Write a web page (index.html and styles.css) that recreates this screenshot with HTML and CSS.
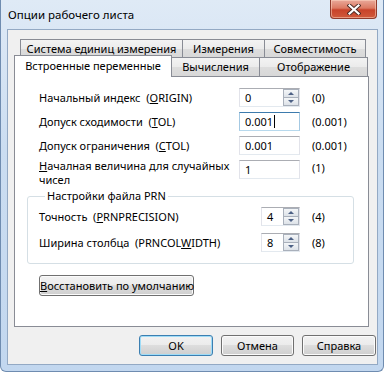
FILE: index.html
```html
<!DOCTYPE html>
<html lang="ru">
<head>
  <meta charset="UTF-8">
  <title>Опции рабочего листа</title>
  <link rel="stylesheet" href="styles.css">
</head>
<body>

  <div class="window">
    <div class="titlebar">
      <span class="title">Опции рабочего листа</span>
      <div class="close">
        <svg width="14" height="11" viewBox="0 0 14 11">
          <path d="M2.5 1.5 L11.5 9.5 M11.5 1.5 L2.5 9.5" stroke="#4a2a24" stroke-width="4" stroke-linecap="square"/>
          <path d="M2.5 1.5 L11.5 9.5 M11.5 1.5 L2.5 9.5" stroke="#ffffff" stroke-width="2.2" stroke-linecap="square"/>
        </svg>
      </div>
    </div>

    <div class="client">
      <div class="tabs">
        <div class="tab-row back">
          <div class="tab w1">Система единиц измерения</div>
          <div class="tab w2">Измерения</div>
          <div class="tab w3">Совместимость</div>
        </div>
        <div class="tab-row front">
          <div class="tab selected">Встроенные переменные</div>
          <div class="tab w4">Вычисления</div>
          <div class="tab w5">Отображение</div>
        </div>

        <div class="panel">
          <div class="row">
            <span class="label">Начальный индекс&nbsp; (<u>O</u>RIGIN)</span>
            <div class="field">
              <span class="value">0</span>
              <div class="spin"><span class="up"></span><span class="down"></span></div>
            </div>
            <span class="default">(0)</span>
          </div>
          <div class="row">
            <span class="label">Допуск сходимости&nbsp; (<u>T</u>OL)</span>
            <div class="field focused">
              <span class="value">0.001<span class="caret"></span></span>
            </div>
            <span class="default">(0.001)</span>
          </div>
          <div class="row">
            <span class="label">Допуск ограничения&nbsp; (<u>C</u>TOL)</span>
            <div class="field">
              <span class="value">0.001</span>
            </div>
            <span class="default">(0.001)</span>
          </div>
          <div class="row tall">
            <span class="label two-lines"><u>Н</u>ачалная величина для случайных<br>чисел</span>
            <div class="field">
              <span class="value">1</span>
            </div>
            <span class="default">(1)</span>
          </div>

          <fieldset class="group">
            <legend>Настройки файла PRN</legend>
            <div class="row">
              <span class="label wide">Точность&nbsp; (<u>P</u>RNPRECISION)</span>
              <div class="field small">
                <span class="value">4</span>
                <div class="spin"><span class="up"></span><span class="down"></span></div>
              </div>
              <span class="default">(4)</span>
            </div>
            <div class="row second">
              <span class="label wide">Ширина столбца&nbsp; (PRNCOL<u>W</u>IDTH)</span>
              <div class="field small">
                <span class="value">8</span>
                <div class="spin"><span class="up"></span><span class="down"></span></div>
              </div>
              <span class="default">(8)</span>
            </div>
          </fieldset>

          <button class="btn reset"><u>В</u>осстановить по умолчанию</button>
        </div>
      </div>

      <div class="buttons">
        <button class="btn ok">OK</button>
        <button class="btn cancel">Отмена</button>
        <button class="btn help">Справка</button>
      </div>
    </div>
  </div>

</body>
</html>
```

FILE: styles.css
```css
    body {
      margin: 0;
      padding: 0;
      font-family: "Noto Sans", Arial, sans-serif;
      font-size: 11px;
      color: #000;
      background: #fff;
    }

    .window {
      box-sizing: border-box;
      width: 384px;
      height: 372px;
      border: 1px solid #6f8cb0;
      border-top: none;
      border-radius: 0 0 6px 6px;
      background: linear-gradient(#dfeaf6, #cbddf1 40%, #c2d7ef);
    }

    .titlebar {
      display: flex;
      justify-content: space-between;
      height: 29px;
    }

    .title {
      padding: 6px 0 0 7px;
      font-size: 11.5px;
      line-height: 17px;
    }

    .close {
      box-sizing: border-box;
      width: 47px;
      height: 19px;
      margin-right: 6px;
      display: flex;
      align-items: center;
      justify-content: center;
      border: 1px solid #8f3b2d;
      border-top: none;
      border-radius: 0 0 4px 4px;
      background: linear-gradient(#e9a99a, #dc7a63 45%, #c8432a 55%, #d05a3c 100%);
      box-shadow: inset 0 0 0 1px rgba(255, 220, 200, 0.5);
    }

    .client {
      box-sizing: border-box;
      width: 371px;
      height: 336px;
      margin-left: 6px;
      border: 1px solid #93a9c4;
      background: #f0f0f0;
      padding: 9px 0 0 6px;
    }

    /* вкладки */
    .tab-row {
      display: flex;
    }

    .tab-row.back {
      padding-left: 6px;
    }

    .tab-row.front {
      margin-top: -1px;
      height: 19px;
      align-items: flex-end;
    }

    .tab {
      box-sizing: border-box;
      height: 19px;
      line-height: 18px;
      text-align: center;
      border: 1px solid #898c95;
      border-bottom: none;
      background: linear-gradient(#f3f3f3, #ebebeb 50%, #dddddd 50%, #d8d8d8);
      white-space: nowrap;
    }

    .tab + .tab {
      margin-left: -1px;
    }

    .w1 { width: 163px; }
    .w2 { width: 83px; }
    .w3 { width: 102px; }
    .w4 { width: 89px; }
    .w5 { width: 109px; }

    .tab.selected {
      position: relative;
      z-index: 1;
      width: 158px;
      height: 22px;
      margin-top: -2px;
      margin-bottom: -1px;
      line-height: 20px;
      background: #fff;
      align-self: flex-start;
    }

    .panel {
      box-sizing: border-box;
      width: 355px;
      height: 251px;
      border: 1px solid #898c95;
      background: #fff;
      padding: 11px 0 0 24px;
    }

    /* строки формы */
    .row {
      display: flex;
      align-items: center;
      height: 19px;
      margin-bottom: 5px;
    }

    .row.tall {
      align-items: flex-start;
      height: 20px;
      margin-bottom: 0;
    }

    .label {
      width: 200px;
      white-space: nowrap;
    }

    .label.two-lines {
      line-height: 14px;
      margin-top: -1px;
    }

    .label.wide {
      width: 222px;
    }

    .field {
      box-sizing: border-box;
      display: flex;
      justify-content: space-between;
      width: 61px;
      height: 19px;
      border: 1px solid #e2e3ea;
      border-top-color: #abadb3;
      border-bottom-color: #e3e9ef;
      background: #fff;
    }

    .field.small {
      width: 39px;
    }

    .field.focused {
      border-color: #a4c9e3;
      border-top-color: #3d7bad;
      border-bottom-color: #b7d9ed;
    }

    .value {
      padding-left: 5px;
      line-height: 17px;
    }

    .caret {
      display: inline-block;
      width: 1px;
      height: 13px;
      margin-left: 1px;
      vertical-align: -2px;
      background: #000;
    }

    .spin {
      display: flex;
      flex-direction: column;
      width: 16px;
    }

    .spin span {
      box-sizing: border-box;
      flex: 1;
      display: flex;
      align-items: center;
      justify-content: center;
      border: 1px solid #a9b0bb;
      background: linear-gradient(#f4f6f8, #dde2e8);
    }

    .spin .down {
      margin-top: -1px;
    }

    .spin .up::after,
    .spin .down::after {
      content: "";
      border-left: 3px solid transparent;
      border-right: 3px solid transparent;
    }

    .spin .up::after {
      border-bottom: 3px solid #4d6185;
    }

    .spin .down::after {
      border-top: 3px solid #4d6185;
    }

    .default {
      margin-left: 12px;
    }

    /* группа PRN */
    .group {
      box-sizing: border-box;
      width: 327px;
      margin: 9px 0 0 -12px;
      padding: 4px 0 11px 11px;
      border: 1px solid #d5dfe5;
      border-radius: 3px;
    }

    .group legend {
      margin-left: 6px;
      padding: 0 2px;
      line-height: 14px;
    }

    .group .row {
      margin-bottom: 0;
    }

    .group .row.second {
      margin-top: 7px;
    }

    /* кнопки */
    .btn {
      box-sizing: border-box;
      height: 21px;
      padding: 0;
      font-family: inherit;
      font-size: 11px;
      color: #000;
      white-space: nowrap;
      border: 1px solid #707070;
      border-radius: 3px;
      background: linear-gradient(#f2f2f2, #ebebeb 50%, #dddddd 50%, #cfcfcf);
      box-shadow: inset 0 0 0 1px #fbfbfb;
    }

    .btn.reset {
      width: 155px;
      margin-top: 11px;
    }

    .buttons {
      display: flex;
      justify-content: flex-end;
      gap: 8px;
      margin-top: 8px;
      padding-right: 1px;
    }

    .ok { width: 74px; border-color: #3c7fb1; box-shadow: inset 0 0 0 1px #9fdcf7; }
    .cancel { width: 73px; }
    .help { width: 74px; }
```
